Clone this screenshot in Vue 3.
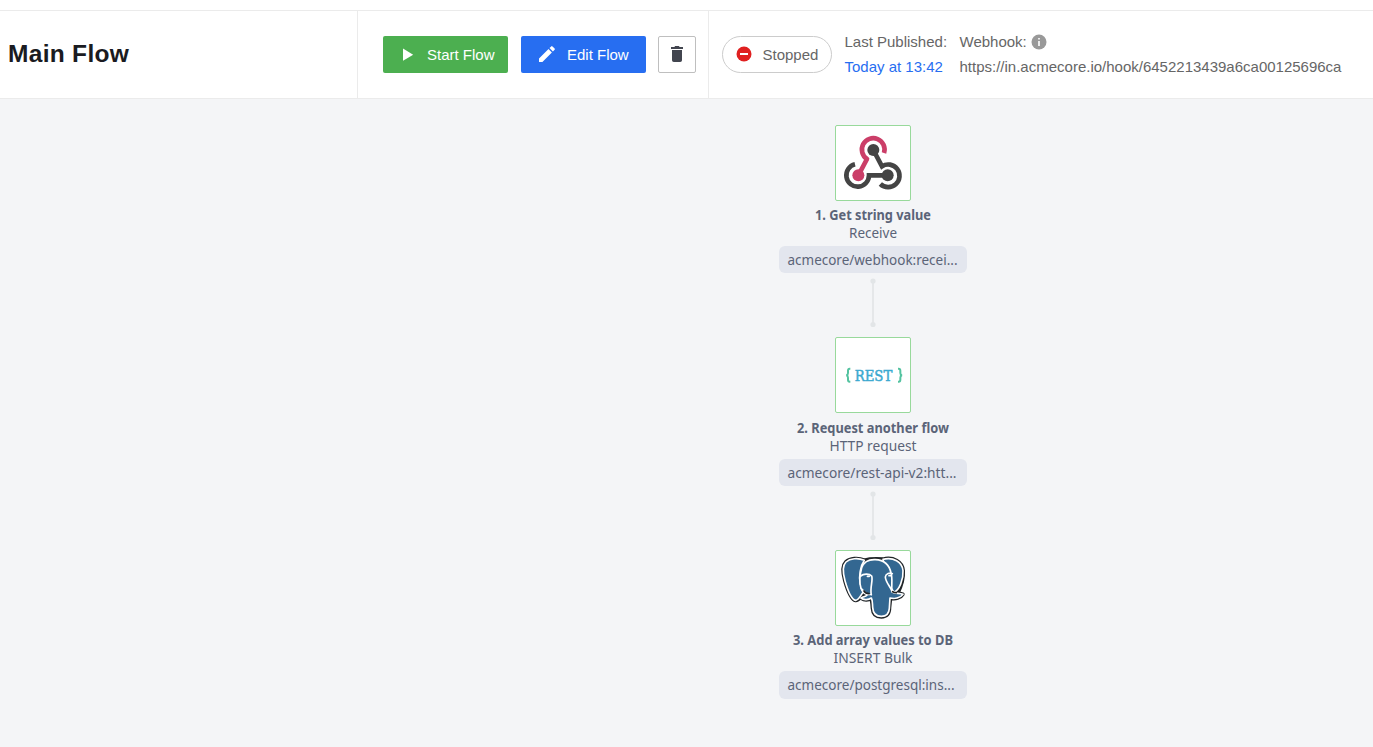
<script setup>
const steps = [
  { id: 1, icon: 'webhook', title: '1. Get string value', titleWidth: 116, action: 'Receive', actionWidth: 48, path: 'acmecore/webhook:recei...', pathWidth: 170 },
  { id: 2, icon: 'rest', title: '2. Request another flow', titleWidth: 152, action: 'HTTP request', actionWidth: 87, path: 'acmecore/rest-api-v2:htt...', pathWidth: 169 },
  { id: 3, icon: 'postgres', title: '3. Add array values to DB', titleWidth: 160, action: 'INSERT Bulk', actionWidth: 79, path: 'acmecore/postgresql:ins...', pathWidth: 167 }
]
</script>

<template>
  <div class="page">
    <header class="toolbar">
      <div class="heading"><h1>Main Flow</h1></div>
      <div class="actions">
        <button class="btn start">
          <svg width="12" height="14" viewBox="0 0 12 14"><path d="M1 .5V12.800L11.200 6.700z" fill="#fff" /></svg>
          <span>Start Flow</span>
        </button>
        <button class="btn edit">
          <svg width="16" height="16" viewBox="0 0 16 16"><path d="M0 12.600V16h3.400L12.900 6.500 9.500 3.100zM15.600 3.800a1 1 0 0 0 0-1.300L13.500.4a1 1 0 0 0-1.300 0l-1.700 1.700 3.400 3.400z" fill="#fff" /></svg>
          <span>Edit Flow</span>
        </button>
        <button class="btn trash" aria-label="Delete">
          <svg width="12" height="16" viewBox="0 0 12 16"><path d="M1 4h10v10.200A1.800 1.800 0 0 1 9.200 16H2.800A1.800 1.800 0 0 1 1 14.200zM0 1h3.300L4.200 0h3.600l.9 1H12v2H0z" fill="#42454f" /></svg>
        </button>
      </div>
      <div class="info">
        <div class="pill">
          <svg width="16" height="16" viewBox="0 0 16 16"><circle cx="8" cy="8" r="7.500" fill="#e02020" /><path d="M4 7h8v2H4z" fill="#fff" /></svg>
          <span>Stopped</span>
        </div>
        <div class="meta published">
          <span>Last Published:</span>
          <a>Today at 13:42</a>
        </div>
        <div class="meta">
          <span class="hook">Webhook:
            <svg width="16" height="16" viewBox="0 0 16 16"><circle cx="8" cy="8" r="7.500" fill="#999" /><path d="M7.200 4h1.600v1.600H7.200zM7.200 7h1.600v5H7.200z" fill="#fff" /></svg>
          </span>
          <span class="url">https://in.acmecore.io/hook/6452213439a6ca00125696ca</span>
        </div>
      </div>
    </header>

    <main class="canvas">
      <section v-for="step in steps" :key="step.id" class="step">
        <div class="tile">
          <svg v-if="step.icon === 'webhook'" width="74" height="74" viewBox="33 33 222 222" fill="none" stroke-width="14">
            <path d="M177 114A34 34 0 1 0 126 132L100 181" stroke="#cb3e68" stroke-linejoin="round" />
            <circle cx="100" cy="181" r="18" fill="#cb3e68" />
            <path d="M90 148A34 34 0 1 0 132 181H188" stroke="#444" />
            <path d="M145 105L171 154A34 34 0 1 1 166 207" stroke="#444" />
            <circle cx="145" cy="105" r="18" fill="#444" />
            <circle cx="188" cy="181" r="18" fill="#444" />
          </svg>
          <svg v-else-if="step.icon === 'rest'" width="74" height="74" viewBox="33 24 222 222">
            <g fill="none" stroke="#54c3a0" stroke-width="6">
              <path d="M76 116h-2q-5 0-5 6v7q0 6-5 7 5 1 5 7v6q0 6 5 6h2" />
              <path d="M219 116h2q5 0 5 6v7q0 6 5 7-5 1-5 7v6q0 6-5 6h-2" />
            </g>
            <text class="rest" x="89" y="152" textLength="113" lengthAdjust="spacingAndGlyphs">REST</text>
          </svg>
          <svg v-else width="74" height="74" viewBox="33 33 222 222" stroke-linejoin="round" stroke-linecap="round">
            <g fill="#202427" stroke="#202427" stroke-width="12">
              <path d="M118 61C99 53 75 55 63 66C51 78 54 101 60 122C67 147 79 178 92 181C101 182 107 169 116 162L132 161C141 171 142 188 143 205C144 222 153 230 169 230C187 230 193 219 193 202L196 174C211 177 227 174 233 163L218 159C225 145 236 119 234 92C232 66 205 50 174 58C158 57 134 57 118 61Z" />
              <path d="M109 174q14 10 31 0" />
            </g>
            <g fill="#336791" stroke="#fff" stroke-width="5">
              <path d="M118 61C99 53 75 55 63 66C51 78 54 101 60 122C67 147 79 178 92 181C103 180 110 159 119 151L106 132C100 109 107 77 118 61Z" />
              <path d="M174 58C205 50 232 66 234 92C236 119 222 151 207 157L188 130Z" />
              <path d="M110 83C116 67 132 58 151 59C176 60 193 75 198 99C204 119 198 136 201 156C212 162 223 158 234 163C226 174 209 177 195 174L193 205C192 222 184 229 169 229C152 229 144 221 143 202C142 190 143 181 139 174C128 182 114 179 108 174C117 169 123 171 127 164L108 145C103 129 105 102 110 83Z" />
              <path d="M107 108C115 101 133 100 140 108C145 121 134 142 139 164" fill="none" />
              <path d="M202 101C195 97 182 101 181 111C182 126 193 136 200 151" fill="none" />
              <path d="M108 145Q113 162 127 164L139 164" fill="none" stroke-width="4" />
            </g>
            <path d="M127 109h6M192 107h4" stroke="#fff" stroke-width="5" />
            <path d="M117 153q5 8 15 8M203 155q5 3 11 3" stroke="#202427" stroke-width="5" fill="none" />
          </svg>
        </div>
        <svg class="caption" width="188" height="45">
          <text class="title" x="94" y="19" text-anchor="middle" :textLength="step.titleWidth" lengthAdjust="spacingAndGlyphs">{{ step.title }}</text>
          <text x="94" y="37" text-anchor="middle" :textLength="step.actionWidth" lengthAdjust="spacingAndGlyphs">{{ step.action }}</text>
        </svg>
        <div class="chip">
          <svg class="caption" width="188" height="27">
            <text x="8.500" y="18.500" :textLength="step.pathWidth" lengthAdjust="spacingAndGlyphs">{{ step.path }}</text>
          </svg>
        </div>
        <svg v-if="step.id < steps.length" class="link" width="8" height="64" viewBox="0 0 8 64">
          <path d="M4 8V51" stroke="#e5e7e9" stroke-width="2" />
          <circle cx="4" cy="8" r="2.600" fill="#e2e5e7" />
          <circle cx="4" cy="51.500" r="2.600" fill="#e2e5e7" />
        </svg>
      </section>
    </main>
  </div>
</template>

<style>
body { margin: 0; background: #fff; }
</style>

<style scoped>
.page {
  height: 747px;
  display: flex;
  flex-direction: column;
  box-sizing: border-box;
  padding-top: 10px;
  overflow: hidden;
  font-family: "Liberation Sans", Arial, sans-serif;
  font-size: 15px;
  color: #666;
}
svg { display: block; flex: none; }
.toolbar {
  display: flex;
  height: 87px;
  flex: none;
  border-top: 1px solid #ebebeb;
  border-bottom: 1px solid #ebebeb;
}
.heading {
  width: 349px;
  padding-left: 8px;
  border-right: 1px solid #ebebeb;
  display: flex;
  align-items: center;
}
h1 {
  margin: 0 0 1px;
  font-size: 24.5px;
  line-height: 30px;
  letter-spacing: 0.3px;
  color: #1a1b21;
}
.actions {
  width: 325px;
  padding-left: 25px;
  border-right: 1px solid #ebebeb;
  display: flex;
  padding-top: 25px;
  align-items: flex-start;
}
.btn {
  font: inherit;
  box-sizing: border-box;
  height: 37px;
  width: 125px;
  border: 0;
  border-radius: 2px;
  color: #fff;
  display: flex;
  align-items: center;
  padding: 0 0 0 19px;
  margin-right: 13px;
}
.start { background: #4caf50; }
.start span { margin-left: 13px; }
.edit { background: #276ef1; margin-right: 12px; padding-left: 18px; }
.edit svg { margin-top: -1px; }
.edit span { margin-left: 12px; }
.trash {
  width: 38px;
  padding: 0;
  margin: 0;
  justify-content: center;
  background: #fff;
  border: 1px solid #bfbfbf;
}
.trash svg { margin-top: -1px; }
.info {
  display: flex;
  align-items: flex-start;
  padding: 25px 0 0 13px;
}
.pill {
  box-sizing: border-box;
  width: 110px;
  height: 37px;
  border: 1px solid #ccc;
  border-radius: 19px;
  display: flex;
  align-items: center;
  padding-left: 13px;
}
.pill svg { margin-top: -1px; }
.pill span { margin-left: 10.5px; }
.meta {
  display: flex;
  flex-direction: column;
  margin: -7px 0 0 12.5px;
  line-height: 25px;
  white-space: nowrap;
}
.published { width: 102.5px; }
.meta a { color: #276ef1; }
.hook { display: flex; align-items: center; gap: 4px; }
.canvas {
  flex: 1;
  background: #f4f5f7;
  padding: 25.9px 0 0 779px;
}
.step {
  width: 188px;
  height: 212.5px;
  display: flex;
  flex-direction: column;
  align-items: center;
}
.tile {
  width: 74px;
  height: 74px;
  margin-bottom: 0.2px;
  border: 1px solid #98d99b;
  border-radius: 2px;
  background: #fff;
}
.caption {
  font-family: "Noto Sans", "Open Sans", sans-serif;
  font-size: 14px;
  fill: #5b6478;
}
.title { font-weight: 700; }
.chip {
  width: 188px;
  height: 27.5px;
  border-radius: 6px;
  background: #e3e6ee;
}
.rest {
  font-family: "DejaVu Serif", serif;
  font-size: 45px;
  fill: #3ba9d0;
  stroke: #3ba9d0;
  stroke-width: 1.5;
}
</style>
